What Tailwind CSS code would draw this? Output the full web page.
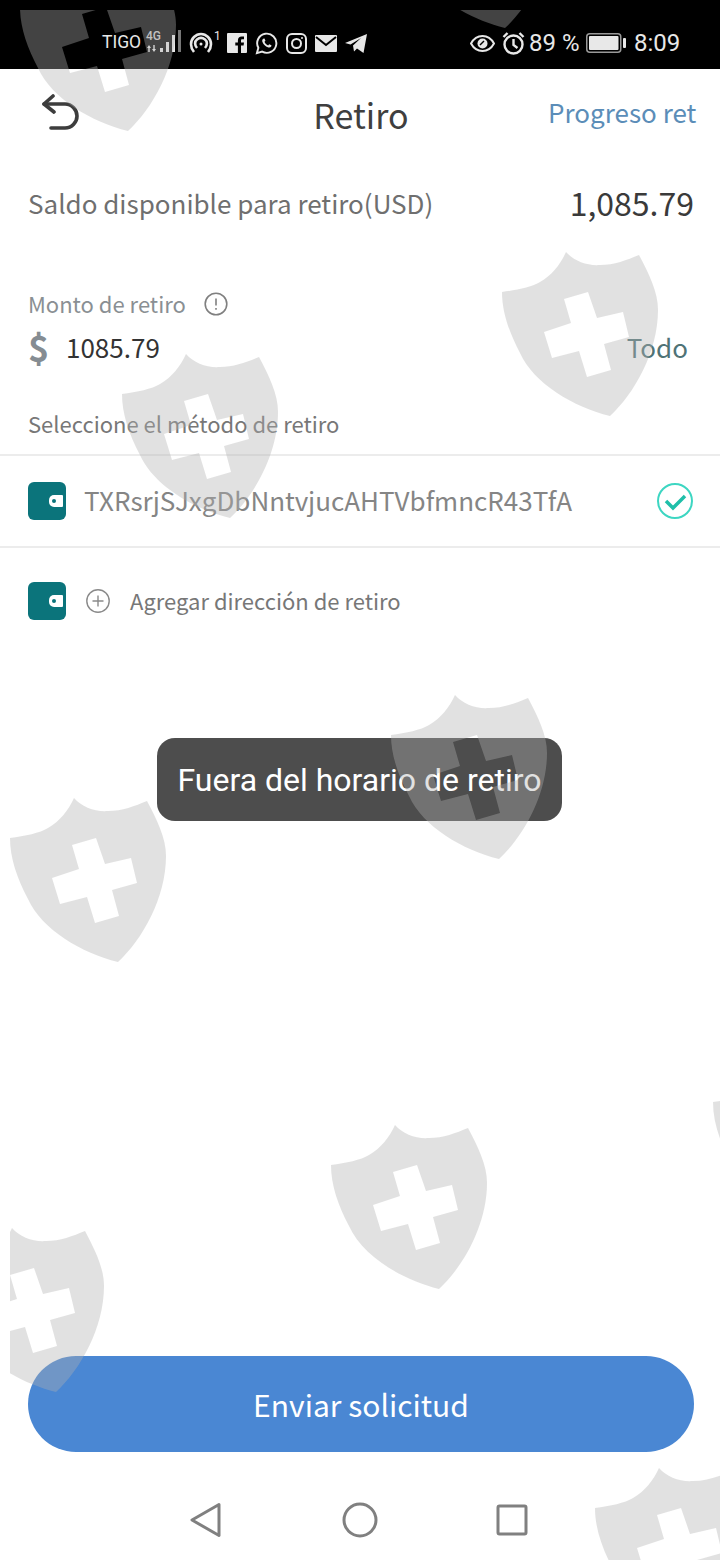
<!DOCTYPE html>
<html lang="es">
<head>
<meta charset="UTF-8">
<meta name="viewport" content="width=device-width, initial-scale=1.0">
<title>Retiro</title>
<script src="https://cdn.jsdelivr.net/npm/@tailwindcss/browser@4"></script>
</head>
<body class="bg-white">
<div class="relative w-[720px] h-[1560px] overflow-hidden bg-white font-['Noto_Sans_CJK_SC','Noto_Sans',sans-serif]">

  <!-- status bar -->
  <div class="h-[69px] bg-black flex items-center text-[#e8e8e8] font-['Roboto',sans-serif] pt-[17px]">
    <span class="ml-[102px] w-[41px] text-[17.500px] leading-none">TIGO</span>
    <div class="relative w-[38px] h-[26px] ml-[3px]">
      <span class="absolute left-0 top-0 text-[12px] leading-none font-medium text-[#ccc]">4G</span>
      <svg class="absolute left-0 top-0" width="38" height="26" viewBox="0 0 38 26" fill="#e8e8e8"><path d="M3 15l2 3H3.700v4H2.300v-4H1zM8 22l-2-3h1.300v-4h1.400v4H10z"/><rect x="14" y="18" width="3" height="4"/><rect x="20" y="12" width="3" height="10"/><rect x="26" y="5" width="3" height="17"/><rect x="32" y="0" width="3" height="22" fill="#777"/></svg>
    </div>
    <svg class="ml-[5px]" width="24" height="24" viewBox="0 0 24 24" fill="none" stroke="#e8e8e8" stroke-width="2.600"><path d="M5 21C1 16 1 10 5 6c4-4 10-4 14 0 4 4 4 10 0 15"/><path d="M8 17c-2.500-3-2.500-6.500 0-8.500 2.500-2 5.500-2 8 0 2.500 2 2.500 5.500 0 8.500"/><circle cx="12" cy="13" r="1.500" fill="#e8e8e8" stroke="none"/></svg>
    <span class="text-[12px] leading-none -mt-[14px] ml-[1px] w-[8px]">1</span>
    <svg class="ml-[5px]" width="20" height="20" viewBox="0 0 20 20"><rect width="20" height="20" rx="1" fill="#e8e8e8"/><path d="M14 20v-7.500h2.600l.4-3h-3V7.700c0-.9.300-1.400 1.500-1.400H17V3.600c-.3 0-1.200-.1-2.300-.1-2.300 0-3.800 1.400-3.800 3.900v2.100H8.300v3h2.600V20z" fill="#000"/></svg>
    <svg class="ml-[8px]" width="23" height="23" viewBox="0 0 24 24" fill="none"><path d="M2 22l1.500-5.500A10 10 0 1 1 7.500 20.500z" stroke="#e8e8e8" stroke-width="2"/><path d="M8.500 7c-1 .8-1.300 2.200-.6 3.700 1.100 2.500 3 4.300 5.500 5.300 1.500.6 2.800.2 3.500-.9.300-.5.300-1 .2-1.200l-2.300-1.200-1.100 1.300c-1.700-.6-3.100-2-3.800-3.700l1-1.100-1-2.300z" fill="#e8e8e8"/></svg>
    <svg class="ml-[8px]" width="21" height="21" viewBox="0 0 21 21" fill="none" stroke="#e8e8e8" stroke-width="2"><rect x="1" y="1" width="19" height="19" rx="5"/><circle cx="10.500" cy="10.500" r="4.500"/><circle cx="16" cy="5" r="1" fill="#e8e8e8" stroke="none"/></svg>
    <svg class="ml-[8px]" width="22" height="17" viewBox="0 0 22 17"><rect width="22" height="17" rx="1" fill="#e8e8e8"/><path d="M1 2l10 8 10-8" fill="none" stroke="#000" stroke-width="2"/></svg>
    <svg class="ml-[8px]" width="22" height="19" viewBox="0 0 22 19" fill="#e8e8e8"><path d="M0 9L22 0l-3.500 19-6.500-4.500-3 3-1-6L16 4 5.500 10.500z"/></svg>

    <svg class="ml-[103px]" width="25" height="19" viewBox="0 0 25 19" fill="none" stroke="#e8e8e8" stroke-width="2"><path d="M1 9.500C4 4 8 2 12.500 2S21 4 24 9.500C21 15 17 17 12.500 17S4 15 1 9.500z"/><circle cx="12.500" cy="9.500" r="5" fill="#e8e8e8" stroke="none"/><path d="M10 11l4-4" stroke="#000" stroke-width="1.500"/></svg>
    <svg class="ml-[7px]" width="23" height="24" viewBox="0 0 23 24" fill="none" stroke="#e8e8e8" stroke-width="2.400"><circle cx="11.500" cy="13.500" r="9"/><path d="M11.500 8v6l4 3"/><path d="M1.500 6l4-4M21.500 6l-4-4"/></svg>
    <span class="ml-[4px] w-[52px] text-[24px] leading-none text-[#e8e8e8]">89 %</span>
    <svg class="ml-[5px]" width="40" height="20" viewBox="0 0 40 20"><rect x=".75" y=".75" width="34" height="18.500" rx="3" fill="none" stroke="#999" stroke-width="1.500"/><rect x="3" y="3" width="29.500" height="14" rx="1" fill="#e8e8e8"/><rect x="37" y="5" width="3" height="10" rx="1" fill="#e8e8e8"/></svg>
    <span class="ml-[8px] text-[24px] leading-none">8:09</span>
  </div>

  <!-- header -->
  <div class="relative h-[94px] flex items-center justify-center">
    <svg class="absolute left-[40px] top-[25px]" width="40" height="38" viewBox="0 0 40 38" fill="none" stroke="#3d3d3d" stroke-width="3.600" stroke-linecap="round" stroke-linejoin="round"><path d="M13 2L4 10 14 18"/><path d="M4 10H25c7 0 12 6 12 12s-5 12-12 12H11"/></svg>
    <span class="ml-[2px] pb-[2px] text-[34px] leading-none text-[#3f3f3f]">Retiro</span>
    <span class="absolute left-[548px] top-[30px] text-[26px] leading-none text-[#5b8db8]">Progreso ret</span>
  </div>

  <!-- saldo -->
  <div class="h-[82px] px-[28px] flex items-center justify-between">
    <span class="pb-[2px] text-[26px] leading-none text-[#6f6f6f]">Saldo disponible para retiro(USD)</span>
    <span class="pb-[4px] -mr-[2px] text-[32px] leading-none text-[#3a3a3a]">1,085.79</span>
  </div>

  <!-- monto -->
  <div class="px-[28px] pt-[47px]">
    <div class="flex items-center h-[24px]">
      <span class="pb-[2px] text-[22px] leading-none text-[#8a8f93]">Monto de retiro</span>
      <svg class="ml-[18px]" width="24" height="24" viewBox="0 0 24 24" fill="none" stroke="#808080" stroke-width="1.600"><circle cx="12" cy="12" r="10.800"/><path d="M12 6.500v7M12 16v1.800"/></svg>
    </div>
    <div class="flex items-center h-[44px] mt-[8px]">
      <span class="w-[38px] text-[36px] leading-none font-bold text-[#858c92]">$</span>
      <span class="pt-[2px] text-[26px] leading-none text-[#333]">1085.79</span>
      <span class="ml-auto mr-[4px] pt-[2px] text-[26px] leading-none text-[#4f7376]">Todo</span>
    </div>
  </div>

  <!-- metodo -->
  <div class="px-[28px] pt-[41px] pb-[17px] text-[22px] leading-[28px] text-[#777]">Seleccione el método de retiro</div>
  <div class="h-[94px] border-y-2 border-[#ececec] px-[28px] flex items-center">
    <div class="relative w-[38px] h-[38px] rounded-[6px] bg-[#0b747b]">
      <div class="absolute left-[21px] top-[13px] w-[14px] h-[12px] bg-white rounded-l-[5px] rounded-r-[1px] flex items-center pl-[3px]"><div class="w-[4px] h-[4px] rounded-full bg-[#0b747b]"></div></div>
    </div>
    <span class="ml-[18px] pb-[2px] text-[26px] leading-none text-[#858585]">TXRsrjSJxgDbNntvjucAHTVbfmncR43TfA</span>
    <svg class="ml-auto -mr-[2px]" width="38" height="38" viewBox="0 0 38 38" fill="none"><circle cx="19" cy="19" r="17" stroke="#3dd6c2" stroke-width="2"/><path d="M10 19l7 7 12-12" stroke="#1fbfa9" stroke-width="3.500"/></svg>
  </div>
  <div class="h-[106px] px-[28px] flex items-center">
    <div class="relative w-[38px] h-[38px] rounded-[6px] bg-[#0b747b]">
      <div class="absolute left-[21px] top-[13px] w-[14px] h-[12px] bg-white rounded-l-[5px] rounded-r-[1px] flex items-center pl-[3px]"><div class="w-[4px] h-[4px] rounded-full bg-[#0b747b]"></div></div>
    </div>
    <svg class="ml-[20px]" width="24" height="24" viewBox="0 0 24 24" fill="none" stroke="#8a8a8a" stroke-width="1.400"><circle cx="12" cy="12" r="11.200"/><path d="M12 6.500v11M6.500 12h11"/></svg>
    <span class="ml-[20px] pb-[2px] text-[22px] leading-none text-[#777]">Agregar dirección de retiro</span>
  </div>

  <!-- bottom -->
  <div class="absolute left-[28px] top-[1356px] w-[666px] h-[96px] rounded-[48px] bg-[#4a87d3] flex items-center justify-center text-[30px] leading-none text-white">Enviar solicitud</div>
  <div class="absolute left-0 top-[1500px] w-full h-[40px] flex items-center">
    <svg class="ml-[189px]" width="34" height="40" viewBox="0 0 34 40" fill="none" stroke="#808080" stroke-width="3" stroke-linejoin="round"><path d="M30 4.500L3 20l27 15.500z"/></svg>
    <svg class="ml-[119px]" width="36" height="36" viewBox="0 0 36 36" fill="none" stroke="#808080" stroke-width="3"><circle cx="18" cy="18" r="16"/></svg>
    <svg class="ml-[118px]" width="32" height="32" viewBox="0 0 32 32" fill="none" stroke="#808080" stroke-width="3" stroke-linejoin="round"><rect x="2" y="2" width="28" height="28" rx="1.500"/></svg>
  </div>

  <!-- toast -->
  <div class="absolute left-[157px] top-[738px] w-[405px] h-[83px] rounded-[18px] bg-[#4d4d4d] flex items-center justify-center font-['Roboto',sans-serif] text-[32px] leading-none text-white">Fuera del horario de retiro</div>

  <!-- watermark layer -->
  <svg class="absolute left-[10px] top-[10px] pointer-events-none" width="710" height="1550" viewBox="10 10 710 1550">
    <defs>
      <path id="shield" fill-rule="evenodd" d="M64 0C72 9 85 14 98 13C112 13 125 8 137 3C147 22 156 40 156 58C156 100 132 142 108 164C72 155 32 132 18 101C7 80 0 60 0 40C15 38 30 35 38 30C50 23 58 13 64 0ZM62 47L69 71L42 80L50 106L77 99L85 125L109 118L102 92L127 85L121 60L95 66L86 40Z"/>
    </defs>
    <g fill="#b0b0b0" fill-opacity="0.38">
      <use href="#shield" x="20" y="-33"/>
      <use href="#shield" x="397" y="-136"/>
      <use href="#shield" x="502" y="252"/>
      <use href="#shield" x="122" y="354"/>
      <use href="#shield" x="391" y="695"/>
      <use href="#shield" x="10" y="798"/>
      <use href="#shield" x="713" y="1062"/>
      <use href="#shield" x="331" y="1125"/>
      <use href="#shield" x="-52" y="1228"/>
      <use href="#shield" x="595" y="1468"/>
    </g>
  </svg>
</div>
</body>
</html>
